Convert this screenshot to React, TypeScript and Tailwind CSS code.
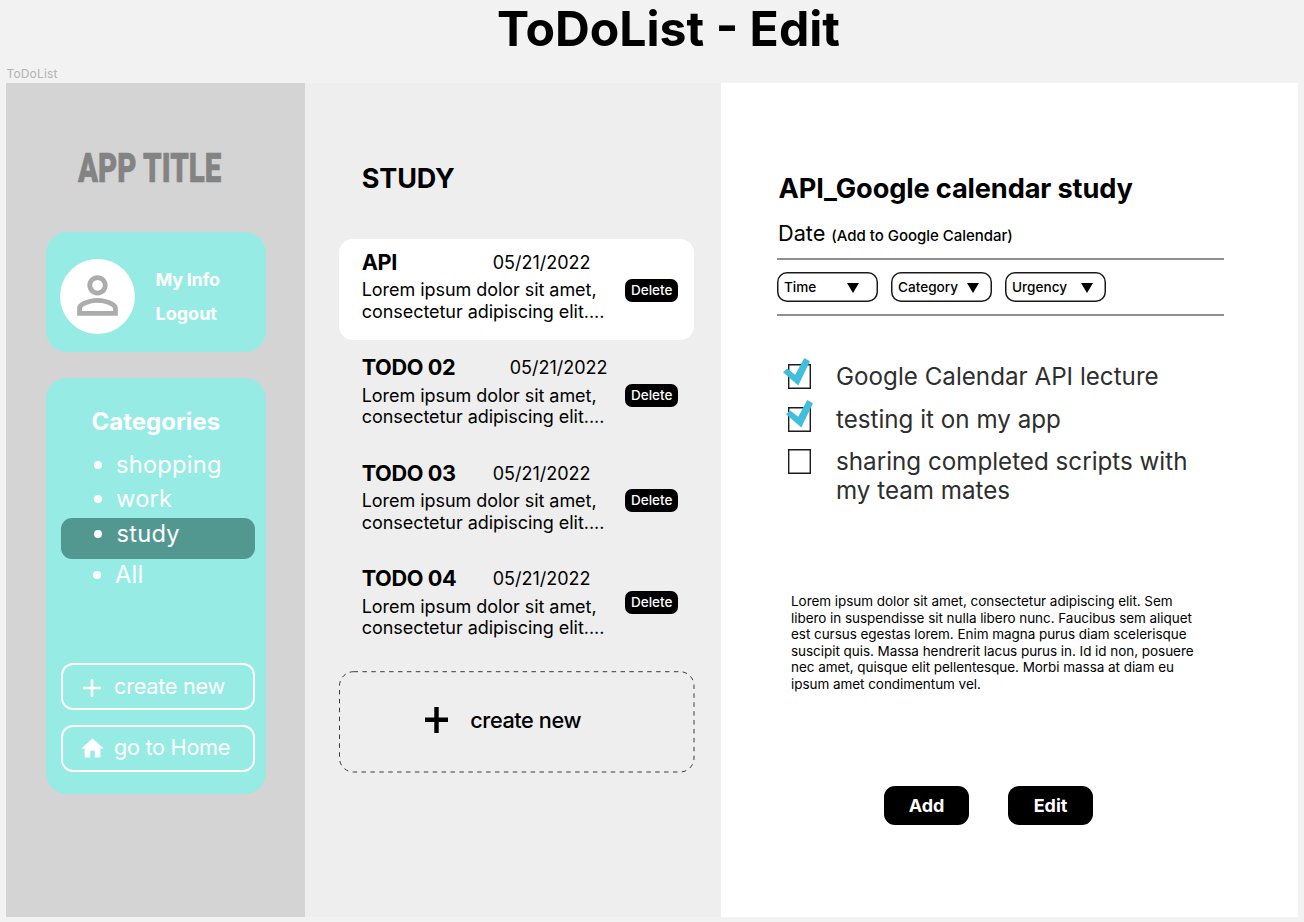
import { MdAdd, MdHome, MdPersonOutline } from "react-icons/md";

type Todo = { title: string; date: string; titleWidth: string; deleteOffset: string; active?: boolean };

const todos: Todo[] = [
  { title: "API", date: "05/21/2022", titleWidth: "w-[131px]", deleteOffset: "mt-[39.5px]", active: true },
  { title: "TODO 02", date: "05/21/2022", titleWidth: "w-[148px]", deleteOffset: "mt-[39.5px]" },
  { title: "TODO 03", date: "05/21/2022", titleWidth: "w-[131px]", deleteOffset: "mt-[39px]" },
  { title: "TODO 04", date: "05/21/2022", titleWidth: "w-[131px]", deleteOffset: "mt-[35px]" },
];

const filters = [
  { label: "Time", arrow: "right-[19px]" },
  { label: "Category", arrow: "right-[13.5px]" },
  { label: "Urgency", arrow: "right-[13.5px]" },
];

const paragraph = [
  "Lorem ipsum dolor sit amet, consectetur adipiscing elit. Sem",
  "libero in suspendisse sit nulla libero nunc. Faucibus sem aliquet",
  "est cursus egestas lorem. Enim magna purus diam scelerisque",
  "suscipit quis. Massa hendrerit lacus purus in. Id id non, posuere",
  "nec amet, quisque elit pellentesque. Morbi massa at diam eu",
  "ipsum amet condimentum vel.",
];

function Category({ name }: { name: string }) {
  return (
    <>
      <span className="size-2 shrink-0 rounded-full bg-white" />
      <span className="ml-[14.5px] text-[23.7px] tracking-[0.22px]">{name}</span>
    </>
  );
}

function Sidebar() {
  return (
    <aside className="flex w-[299px] shrink-0 flex-col bg-[#d4d4d4] pl-[39.5px] text-white">
      <h2 className="mt-[60px] ml-[32px] h-[50px] origin-left scale-x-[0.72] whitespace-nowrap font-['Roboto',sans-serif] text-[41px] leading-[50px] font-black text-[#838383] [-webkit-text-stroke:0.6px_#838383]">
        APP TITLE
      </h2>
      <div className="mt-[39.5px] flex h-[120px] w-[220px] rounded-[21px] bg-[#97ebe5] pt-[27px] pl-3.5">
        <div className="flex size-[75px] items-center justify-center rounded-full bg-white">
          <MdPersonOutline className="-mt-[3px] size-[61px] text-[#acacac]" />
        </div>
        <div className="ml-[21px] flex flex-col pt-[4px] text-[18px] leading-[33.5px] font-bold">
          <span className="tracking-[-0.25px]">My Info</span>
          <span>Logout</span>
        </div>
      </div>
      <div className="mt-[25.5px] flex h-[416.5px] w-[220px] flex-col rounded-[21px] bg-[#97ebe5] px-[15.5px]">
        <h3 className="mt-[29px] ml-[30.5px] h-[30px] text-[24px] leading-[30px] font-bold">Categories</h3>
        <ul className="mt-[11px]">
          <li className="flex h-[34.5px] items-center pl-[32.5px]">
            <Category name="shopping" />
          </li>
          <li className="flex h-[34.5px] items-center pl-[32.5px]">
            <Category name="work" />
          </li>
          <li className="mt-[1px] flex h-[41px] w-[194px] items-center rounded-[11px] bg-[#539791] pb-[9px] pl-[33px]">
            <Category name="study" />
          </li>
          <li className="flex h-[32px] items-center pl-[31.5px]">
            <Category name="All" />
          </li>
        </ul>
        <button className="mt-[72px] flex h-[47px] w-[194px] shrink-0 items-center rounded-xl border-2 border-white pl-[14px] text-[21.7px] tracking-[-0.26px]">
          <MdAdd className="mt-[3px] size-[30px]" />
          <span className="ml-[7px]">create new</span>
        </button>
        <button className="mt-[15.5px] flex h-[47px] w-[194px] shrink-0 items-center rounded-xl border-2 border-white pb-[3px] pl-[16px] text-[21.7px] tracking-[-0.3px]">
          <MdHome className="mt-[3px] size-[27px]" />
          <span className="ml-[8px]">go to Home</span>
        </button>
      </div>
    </aside>
  );
}

function TodoItem({ todo }: { todo: Todo }) {
  return (
    <li className={`flex h-[101px] w-[355.5px] rounded-[14px] pl-[23px] ${todo.active ? "bg-white" : ""}`}>
      <div className="w-[263.5px] shrink-0 pt-[11px]">
        <div className="flex h-6 items-center">
          <span className={`text-[21.7px] font-bold tracking-[-0.4px] ${todo.titleWidth}`}>{todo.title}</span>
          <span className="text-[18px]">{todo.date}</span>
        </div>
        <p className="mt-[5px] text-[18px] leading-[21.7px] tracking-[-0.05px] whitespace-nowrap">
          Lorem ipsum dolor sit amet,
          <br />
          consectetur adipiscing elit....
        </p>
      </div>
      <button
        className={`flex h-[23px] w-[53px] shrink-0 items-center justify-center rounded-[7px] bg-black text-[13.5px] font-medium text-white ${todo.deleteOffset}`}
      >
        Delete
      </button>
    </li>
  );
}

function TodoColumn() {
  return (
    <section className="flex w-[415.5px] shrink-0 flex-col bg-[#eeeeee] pl-[33.7px]">
      <h2 className="mt-[80px] ml-[23px] h-[32px] text-[27px] leading-[32px] font-bold tracking-[-0.1px]">STUDY</h2>
      <ul className="mt-[44.5px] flex flex-col gap-[4.5px]">
        {todos.map((t) => (
          <TodoItem key={t.title} todo={t} />
        ))}
      </ul>
      <button className="relative mt-[14px] flex h-[102px] w-[356px] items-center pl-[86px] text-[21.7px] font-medium">
        <svg className="absolute inset-0" width="356" height="102" fill="none">
          <rect x="0.5" y="0.7" width="354.5" height="100.3" rx="14" stroke="#3a3a3a" strokeWidth="1" strokeDasharray="4.5 4.4" />
        </svg>
        <svg width="23" height="26" viewBox="0 0 23 26" className="mt-[-3px]">
          <path d="M9.3 0h4.4v10.6H23v4.4h-9.3V26H9.3V15H0v-4.4h9.3z" fill="#000" />
        </svg>
        <span className="ml-[22.5px] mt-[-3px] tracking-[-0.4px]">create new</span>
      </button>
    </section>
  );
}

function CheckRow({ label, height, check }: { label: string; height: string; check?: string }) {
  return (
    <li className={`flex items-start ${height}`}>
      <span className="relative mt-[2px] h-[25px] w-[23.5px] shrink-0 shadow-[inset_0_0_0_1.4px_#1c1c1c]">
        {check && (
          <svg className={`absolute ${check}`} width="27" height="28" viewBox="0 0 27 28">
            <path d="M0 14.3 4.2 10.4l8 6.3L21.3 0 27 3.3 15.3 27.5z" fill="#42bddc" />
          </svg>
        )}
      </span>
      <span className="ml-[25px] w-[370px] text-[24.2px] leading-[29.3px]">{label}</span>
    </li>
  );
}

function Detail() {
  return (
    <main className="flex flex-1 flex-col bg-white pl-[57px]">
      <h2 className="mt-[90px] ml-px h-[32px] text-[27.2px] leading-[32px] font-bold tracking-[-0.14px]">
        API_Google calendar study
      </h2>
      <div className="mt-[13px] ml-[0.5px] flex h-[30px] items-baseline leading-[30px]">
        <span className="text-[21.7px]">Date</span>
        <span className="ml-[6px] text-[15px] font-medium tracking-[-0.03px]">(Add to Google Calendar)</span>
      </div>
      <div className="mt-[10.5px] -ml-[0.5px] flex h-[58px] w-[446.5px] items-center gap-[13px] border-y-2 border-[#8f8f8f]">
        {filters.map((f) => (
          <button
            key={f.label}
            className="relative flex h-[29.5px] w-[101px] items-center rounded-[10px] pl-[7px] text-[13.6px] font-medium shadow-[inset_0_0_0_1.5px_#1a1a1a]"
          >
            {f.label}
            <svg className={`absolute top-[11px] ${f.arrow}`} width="12" height="10" viewBox="0 0 12 10">
              <path d="M0 0h12L6 10z" fill="#000" />
            </svg>
          </button>
        ))}
      </div>
      <ul className="mt-[46px] ml-[10px] text-[#2e2e2e]">
        <CheckRow label="Google Calendar API lecture" height="h-[43px]" check="-left-[5px] -top-[6px]" />
        <CheckRow label="testing it on my app" height="h-[42px]" check="-left-[1.5px] -top-[7px]" />
        <CheckRow label="sharing completed scripts with my team mates" height="h-[60px]" />
      </ul>
      <p className="mt-[86px] ml-[13.5px] text-[13.5px] leading-[16.5px] tracking-[-0.05px] whitespace-nowrap">
        {paragraph.map((line) => (
          <span key={line} className="block">
            {line}
          </span>
        ))}
      </p>
      <div className="mt-[94px] ml-[106.5px] flex gap-[39px] text-[18px] font-bold text-white">
        <button className="h-[38.5px] w-[85px] rounded-[11px] bg-black">Add</button>
        <button className="h-[38.5px] w-[85px] rounded-[11px] bg-black">Edit</button>
      </div>
    </main>
  );
}

export default function App() {
  return (
    <div className="flex h-[922px] w-[1304px] flex-col overflow-hidden bg-[#f2f2f2] font-['Inter',sans-serif] text-black">
      <header className="h-[82.5px] shrink-0">
        <h1 className="h-[57px] pl-[33px] text-center text-[48.2px] leading-[57px] font-bold">ToDoList - Edit</h1>
        <div className="pt-[9px] pl-[6.5px] text-[12px] leading-[15px] tracking-[0.15px] text-[#b3b3b3]">ToDoList</div>
      </header>
      <div className="ml-[6px] flex h-[834.5px] w-[1292px]">
        <Sidebar />
        <TodoColumn />
        <Detail />
      </div>
    </div>
  );
}
